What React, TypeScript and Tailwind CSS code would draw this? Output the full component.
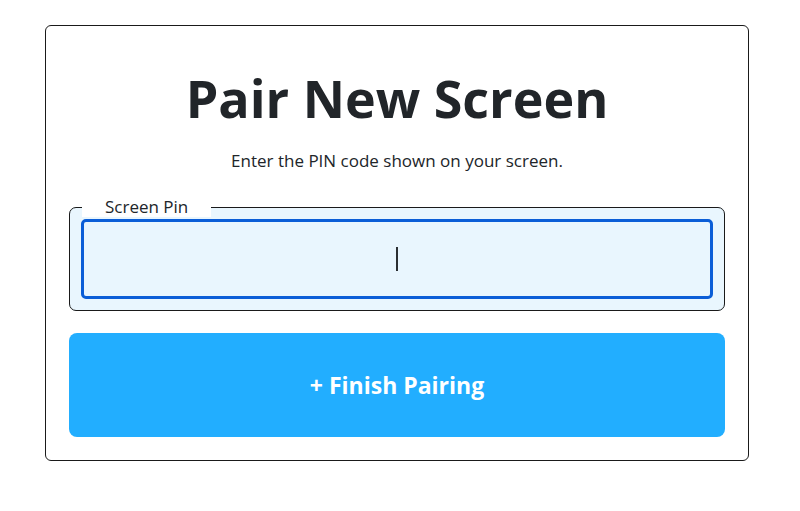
export default function App() {
  return (
    <div className="min-h-[511px] bg-white pt-[25px] font-['Open_Sans',sans-serif]">
      <div className="ml-[45px] w-[704px] rounded-[6px] border border-[#1a1a1a] px-[23px] pb-[23px] pt-[40px]">
        <h1 className="text-center text-[52px] font-bold leading-[64px] text-[#212529]">
          Pair New Screen
        </h1>
        <p className="mt-[19px] text-center text-[17px] leading-[24px] text-[#212529]">
          Enter the PIN code shown on your screen.
        </p>
        <fieldset className="mt-[24px] rounded-[7px] border border-[#1a1a1a] bg-[#e9f6fe] px-[11px] pb-[11px] pt-[2px]">
          <legend className="ml-[1px] bg-white px-[23px] text-[17px] leading-[20px] text-[#212529]">
            Screen Pin
          </legend>
          <div className="relative flex h-[80px] items-center justify-center rounded-[5px] border-[3px] border-[#0b5ed7] bg-[#e9f6fe]">
            <span className="h-[24px] w-[2px] bg-[#2b2f33]" />
          </div>
        </fieldset>
        <button className="mt-[22px] flex h-[104px] w-full items-center justify-center rounded-[8px] bg-[#22aeff] text-[23px] font-bold text-white">
          + Finish Pairing
        </button>
      </div>
    </div>
  );
}
